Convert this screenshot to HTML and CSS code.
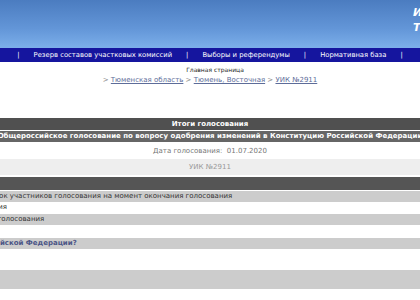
FILE: index.html
```html
<!DOCTYPE html>
<html lang="ru">
<head>
  <meta charset="UTF-8" />
  <title>Итоги голосования — УИК №2911</title>
  <link rel="stylesheet" href="styles.css">
</head>
<body>

  <header class="banner">
    <div class="banner-title">
      <span>ИЗБИРАТЕЛЬНАЯ КОМИССИЯ</span>
      <span>ТЮМЕНСКОЙ ОБЛАСТИ</span>
    </div>
  </header>

  <nav class="menu">
    <span class="pipe">|</span>
    <a href="#">Резерв составов участковых комиссий</a>
    <span class="pipe">|</span>
    <a href="#">Выборы и референдумы</a>
    <span class="pipe">|</span>
    <a href="#">Нормативная база</a>
    <span class="pipe">|</span>
  </nav>

  <div class="crumbs">
    <div class="home">Главная страница</div>
    <div class="path">
      &gt; <a href="#">Тюменская область</a>
      &gt; <a href="#">Тюмень, Восточная</a>
      &gt; <a href="#">УИК №2911</a>
    </div>
  </div>

  <div class="stage">
    <div class="results">
      <div class="row head">Итоги голосования</div>
      <div class="row title">Общероссийское голосование по вопросу одобрения изменений в Конституцию Российской Федерации</div>
      <div class="row date">Дата голосования:&nbsp;&nbsp;01.07.2020</div>
      <div class="row uik">УИК №2911</div>
      <div class="row band"></div>

      <div class="line grey"><span>Число участников голосования, включенных в список участников голосования на момент окончания голосования</span><span class="num">1842</span></div>
      <div class="line second"><span>Число бюллетеней, выданных в пунктах голосования</span><span class="num">1203</span></div>
      <div class="line grey"><span>Число бюллетеней, выданных вне помещения для голосования</span><span class="num">96</span></div>
      <div class="line tall"></div>
      <div class="line grey question"><span>Вы одобряете изменения в Конституцию Российской Федерации?</span></div>
      <div class="line big"></div>
      <div class="line grey bigger"></div>
      <div class="line"></div>
    </div>
  </div>

</body>
</html>
```

FILE: styles.css
```css
html, body {
  overflow: hidden;
}

body {
  margin: 0;
  font-family: "DejaVu Sans", Verdana, sans-serif;
  font-size: 7px;
  color: #333;
  background: #fff;
}

a {
  color: inherit;
}

.banner {
  height: 48px;
  background: linear-gradient(#4b7cc0, #6396d8 60%, #7cafea);
  padding-left: 413px;
  white-space: nowrap;
}

.banner-title {
  display: flex;
  flex-direction: column;
  padding-top: 5px;
  color: #fff;
  font-style: italic;
  font-weight: bold;
  font-size: 11px;
  line-height: 15px;
}

.menu {
  height: 14px;
  background: #15159e;
  color: #fff;
  font-size: 6.8px;
  display: flex;
  justify-content: center;
  align-items: center;
  gap: 14px;
  white-space: nowrap;
}

.menu a {
  text-decoration: none;
}

.crumbs {
  padding-top: 3px;
  text-align: center;
  line-height: 10px;
  height: 53px;
}

.home {
  font-size: 6px;
  color: #222;
  padding-left: 10px;
}

.path {
  color: #888;
}

.path a {
  color: #5d6c99;
}

.stage {
  display: flex;
  justify-content: center;
}

.results {
  flex: none;
  width: 804px;
}

.row {
  text-align: center;
  white-space: nowrap;
}

.head {
  height: 12px;
  line-height: 12px;
  background: #505050;
  color: #fff;
  font-weight: bold;
  margin-bottom: 1px;
}

.title {
  height: 11px;
  line-height: 11px;
  background: #666;
  color: #fff;
  font-weight: bold;
  margin-bottom: 1px;
}

.date {
  height: 16px;
  line-height: 16px;
  color: #777;
}

.uik {
  height: 16px;
  line-height: 16px;
  background: #eee;
  color: #999;
  margin-bottom: 2px;
}

.band {
  height: 13px;
  background: #555;
  margin-bottom: 1px;
}

.line {
  display: flex;
  justify-content: space-between;
  height: 11px;
  line-height: 11px;
  white-space: nowrap;
}

.line.grey {
  background: #ccc;
}

.line.second {
  height: 12px;
}

.line.tall {
  height: 13px;
}

.line.big {
  height: 21px;
}

.line.bigger {
  height: 19px;
}

.num {
  padding-right: 20px;
}

.question {
  color: #4b5586;
  font-weight: bold;
}
```
